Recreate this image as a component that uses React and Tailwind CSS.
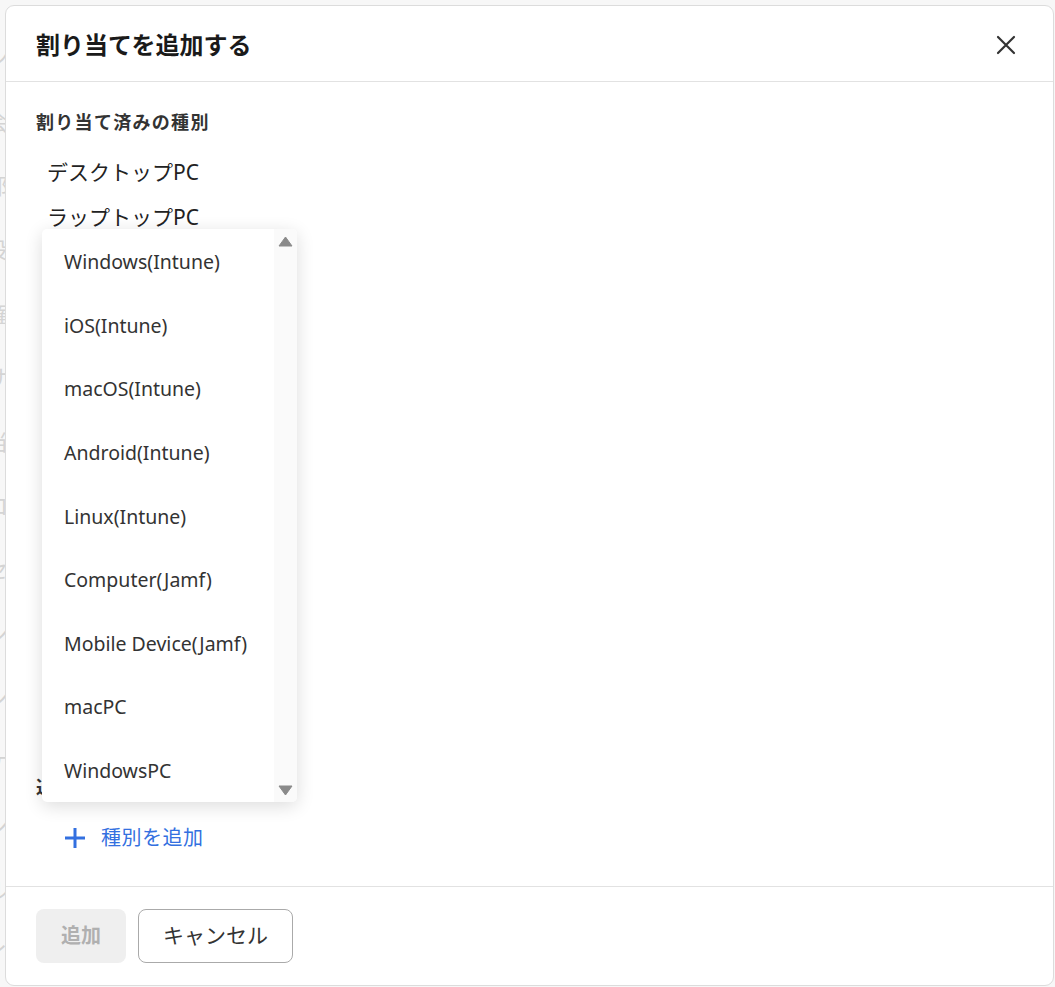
import React from "react";

const font = { fontFamily: '"Noto Sans", "Noto Sans CJK JP", sans-serif' };

const bgChars = ["ン", "会", "部", "役", "権", "サ", "当", "ロ", "セ", "シ", "シ", "ケ", "シ", "ル", "イ"];
const items = [
  "Windows(Intune)",
  "iOS(Intune)",
  "macOS(Intune)",
  "Android(Intune)",
  "Linux(Intune)",
  "Computer(Jamf)",
  "Mobile Device(Jamf)",
  "macPC",
  "WindowsPC",
];

export default function App() {
  return (
    <div className="relative w-[1055px] h-[987px] overflow-hidden bg-[#f7f7f7]" style={font}>
      {/* background page (mostly hidden) */}
      <div className="flex flex-col pt-[44px] gap-[38px] -ml-[14px] text-[22px] leading-[26px] text-[#d4d4d4]">
        {bgChars.map((c, i) => (
          <div key={i}>{c}</div>
        ))}
      </div>

      {/* modal */}
      <div className="absolute left-[5px] top-[5px] w-[1049px] h-[981px] bg-white border border-[#dcdcdc] rounded-[9px] flex flex-col">
        <div className="h-[76px] shrink-0 border-b border-[#e2e2e2] flex items-center justify-between pl-[30px] pr-[37px] pt-[2px]">
          <div className="text-[24px] font-bold text-[#1a1a1a]">割り当てを追加する</div>
          <svg width="20" height="20" viewBox="0 0 20 20" className="text-[#333]">
            <path d="M2 2 L18 18 M18 2 L2 18" stroke="currentColor" strokeWidth="2.2" strokeLinecap="round" />
          </svg>
        </div>

        <div className="relative flex-1 flex flex-col pl-[30px] pt-[27px]">
          <div className="text-[18px] leading-[26px] font-bold text-[#333] tracking-[1.3px]">割り当て済みの種別</div>
          <div className="flex flex-col pl-[11px] pt-[22px] gap-[15px] text-[21px] leading-[30px] text-[#222]">
            <div>デスクトップPC</div>
            <div>ラップトップPC</div>
          </div>
          <div className="mt-[542px] text-[18px] leading-[26px] font-bold text-[#333]">追加する種別</div>
          <div className="flex items-center gap-[15px] pl-[28px] mt-[23px] text-[20px] leading-[30px] text-[#3370e0]">
            <svg width="22" height="22" viewBox="0 0 22 22">
              <path d="M11 1 V21 M1 11 H21" stroke="currentColor" strokeWidth="3" />
            </svg>
            <span className="tracking-[0.5px]">種別を追加</span>
          </div>

          {/* dropdown */}
          <div className="absolute left-[36px] top-[147px] w-[255px] h-[573px] bg-white rounded-[5px] shadow-[0_4px_18px_rgba(0,0,0,0.14)] flex overflow-hidden">
            <div className="flex-1 flex flex-col pt-[1px]">
              {items.map((t) => (
                <div key={t} className="h-[63.6px] shrink-0 flex items-center pl-[22px] text-[19.5px] text-[#333]">
                  {t}
                </div>
              ))}
            </div>
            <div className="w-[23px] bg-[#fafafa] flex flex-col items-center justify-between pt-[7px] pb-[6px]">
              <svg width="15" height="11" viewBox="0 0 15 11">
                <path d="M7.5 1 L14 10 H1 Z" fill="#8a8a8a" stroke="#8a8a8a" strokeLinejoin="round" />
              </svg>
              <svg width="15" height="11" viewBox="0 0 15 11">
                <path d="M1 1 H14 L7.5 10 Z" fill="#8a8a8a" stroke="#8a8a8a" strokeLinejoin="round" />
              </svg>
            </div>
          </div>
        </div>

        <div className="h-[99px] shrink-0 border-t border-[#e2e2e2] flex items-center gap-[12px] pl-[30px]">
          <div className="w-[90px] h-[54px] rounded-[8px] bg-[#efefef] flex items-center justify-center text-[20px] font-bold text-[#b0b0b0]">
            追加
          </div>
          <div className="w-[155px] h-[54px] rounded-[8px] border border-[#aaaaaa] bg-white flex items-center justify-center text-[21px] text-[#333]">
            キャンセル
          </div>
        </div>
      </div>
    </div>
  );
}
